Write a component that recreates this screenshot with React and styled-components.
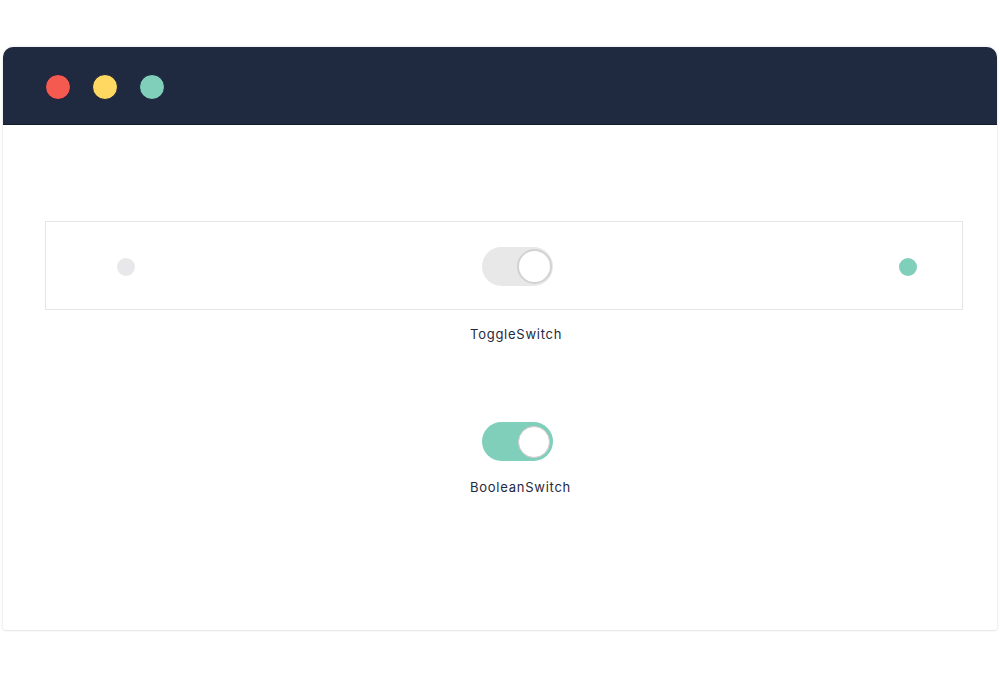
import React, { useState } from "react";
import styled, { createGlobalStyle } from "styled-components";

const Global = createGlobalStyle`
  html, body { margin: 0; padding: 0; background: #ffffff; }
  body { font-family: "Inter", "Lato", sans-serif; }
`;

const Page = styled.div`
  width: 1000px;
  height: 682px;
  padding: 47px 3px 0 3px;
  box-sizing: border-box;
`;

const Window = styled.div`
  height: 583px;
  border-radius: 10px 10px 2px 2px;
  background: #ffffff;
  box-shadow: 0 0 3px rgba(0, 0, 0, 0.12), 0 1px 2px rgba(0, 0, 0, 0.06);
  display: flex;
  flex-direction: column;
  overflow: hidden;
`;

const TitleBar = styled.div`
  height: 78px;
  box-sizing: border-box;
  background: #1f2940;
  display: flex;
  align-items: center;
  gap: 21px;
  padding: 2px 0 0 42px;
  flex-shrink: 0;
  border-bottom: 1px solid #141b2c;
`;

const Light = styled.span`
  width: 24px;
  height: 24px;
  border-radius: 50%;
  background: ${(p) => p.$color};
  border: 1px solid #17203a;
  box-sizing: content-box;
`;

const Body = styled.div`
  flex: 1;
  padding: 96px 34px 0 42px;
  display: flex;
  flex-direction: column;
`;

const Panel = styled.div`
  height: 89px;
  box-sizing: border-box;
  border: 1px solid #e6e6e6;
  display: flex;
  align-items: center;
  justify-content: space-between;
  padding: 2px 45px 0 71px;
`;

const Dot = styled.span`
  width: 18px;
  height: 18px;
  border-radius: 50%;
  background: ${(p) => (p.$on ? "#7fcfbb" : "#e8e8ea")};
`;

const Column = styled.div`
  display: flex;
  flex-direction: column;
  align-items: flex-start;
  padding-left: 425px;
  margin-top: ${(p) => p.$top}px;
`;

const Label = styled.div`
  font-size: 13px;
  line-height: 16px;
  color: #1f2940;
  margin-top: ${(p) => p.$gap}px;
  letter-spacing: 0.75px;
`;

const Track = styled.button`
  width: 71px;
  height: 39px;
  border-radius: 20px;
  border: none;
  padding: 0 ${(p) => (p.$on ? 3 : 1)}px;
  margin-left: ${(p) => p.$indent || 0}px;
  background: ${(p) => (p.$on ? "#7fcfbb" : "#e8e8e8")};
  display: flex;
  align-items: center;
  justify-content: ${(p) => (p.$right ? "flex-end" : "flex-start")};
  cursor: pointer;
  box-sizing: border-box;
`;

const Knob = styled.span`
  width: ${(p) => (p.$on ? 30 : 31)}px;
  height: ${(p) => (p.$on ? 30 : 31)}px;
  border-radius: 50%;
  background: #ffffff;
  border: ${(p) => (p.$on ? "1.5px solid #d8c9cc" : "2px solid #d2d2d2")};
  box-sizing: content-box;
`;

export default function App() {
  const [toggle, setToggle] = useState(true);
  const [bool, setBool] = useState(true);
  return (
    <>
      <Global />
      <Page>
        <Window>
          <TitleBar>
            <Light $color="#f55a51" />
            <Light $color="#ffd862" />
            <Light $color="#7fcfbb" />
          </TitleBar>
          <Body>
            <Panel>
              <Dot />
              <Track $right={toggle} onClick={() => setToggle(!toggle)}>
                <Knob />
              </Track>
              <Dot $on />
            </Panel>
            <Column $top={0}>
              <Label $gap={16}>ToggleSwitch</Label>
            </Column>
            <Column $top={80}>
              <Track $on={bool} $right={bool} $indent={12} onClick={() => setBool(!bool)}>
                <Knob $on />
              </Track>
              <Label $gap={18}>BooleanSwitch</Label>
            </Column>
          </Body>
        </Window>
      </Page>
    </>
  );
}
